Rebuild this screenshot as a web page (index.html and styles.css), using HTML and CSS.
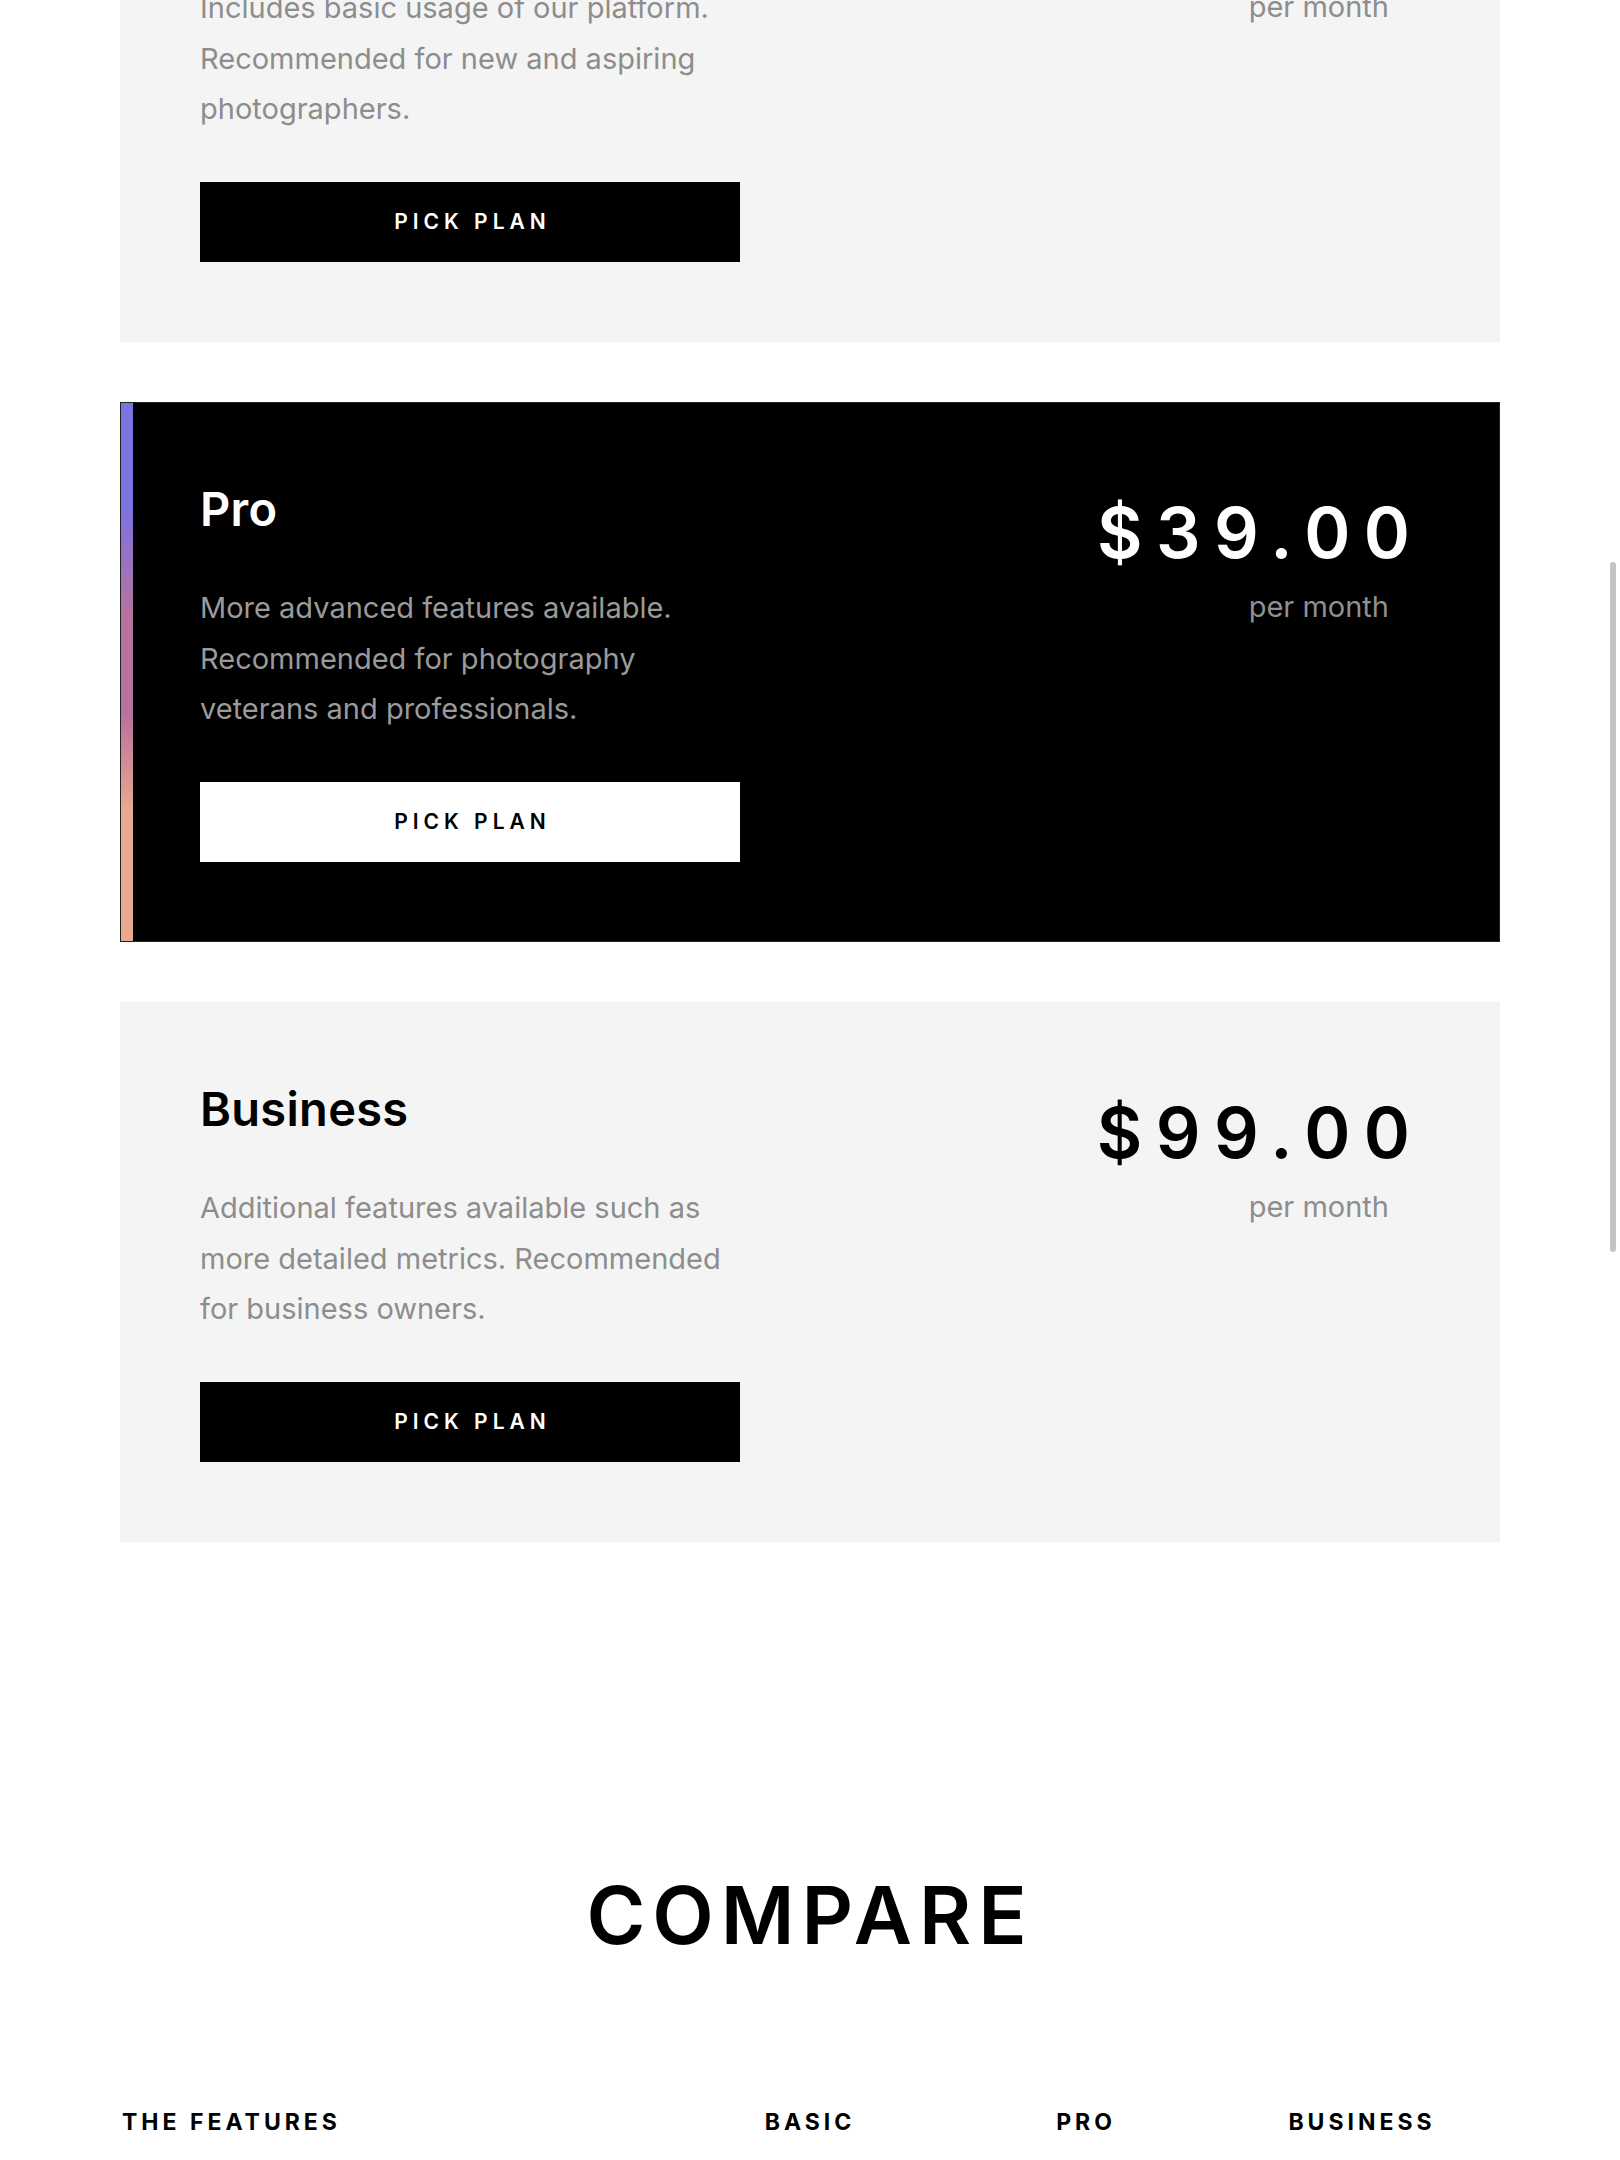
FILE: index.html
```html
<!DOCTYPE html>
<html lang="en">
<head>
<meta charset="utf-8">
<title>Pricing</title>
<link rel="stylesheet" href="styles.css">
</head>
<body>
<main class="page">
  <section class="plans">
    <article class="plan">
      <div class="plan-info">
        <h3 class="plan-name">Basic</h3>
        <p class="plan-desc">Includes basic usage of our platform. Recommended for new and aspiring photographers.</p>
        <a class="plan-btn" href="#">PICK PLAN</a>
      </div>
      <div class="plan-price">
        <div class="price">$19.00</div>
        <div class="period">per month</div>
      </div>
    </article>
    <article class="plan plan-pro">
      <div class="plan-info">
        <h3 class="plan-name">Pro</h3>
        <p class="plan-desc">More advanced features available. Recommended for photography veterans and professionals.</p>
        <a class="plan-btn" href="#">PICK PLAN</a>
      </div>
      <div class="plan-price">
        <div class="price">$39.00</div>
        <div class="period">per month</div>
      </div>
    </article>
    <article class="plan">
      <div class="plan-info">
        <h3 class="plan-name">Business</h3>
        <p class="plan-desc">Additional features available such as more detailed metrics. Recommended for business owners.</p>
        <a class="plan-btn" href="#">PICK PLAN</a>
      </div>
      <div class="plan-price">
        <div class="price">$99.00</div>
        <div class="period">per month</div>
      </div>
    </article>
  </section>

  <section class="compare">
    <h2 class="compare-title">COMPARE</h2>
    <div class="compare-head">
      <div class="col-feature">THE FEATURES</div>
      <div class="col-plan">BASIC</div>
      <div class="col-plan">PRO</div>
      <div class="col-plan">BUSINESS</div>
    </div>
  </section>
</main>
<div class="scroll-thumb"></div>
</body>
</html>
```
FILE: styles.css
```css
* { box-sizing: border-box; }

html, body {
  margin: 0;
  padding: 0;
  background: #fff;
  overflow: hidden;
}

body {
  font-family: Inter, "Liberation Sans", sans-serif;
  color: #000;
}

.page {
  width: 1380px;
  margin: 0 auto;
}

.plans {
  display: flex;
  flex-direction: column;
  gap: 60px;
  margin-top: -198px;
}

.plan {
  position: relative;
  display: flex;
  justify-content: space-between;
  align-items: flex-start;
  padding: 80px;
  background: #f4f4f4;
  height: 540px;
}

.plan-pro {
  background: #000;
  border: 1px solid #222;
  padding: 79px;
  color: #fff;
}

.plan-pro::before {
  content: "";
  position: absolute;
  top: 0;
  bottom: 0;
  left: 0;
  width: 12px;
  background: linear-gradient(to bottom, #7b74e0 0%, #7b74e0 20%, #b8739c 40%, #b8739c 58%, #e9a98f 76%, #e9a98f 100%);
}

.plan-info {
  width: 540px;
  display: flex;
  flex-direction: column;
  align-items: flex-start;
}

.plan-name {
  margin: 0;
  font-size: 47px;
  line-height: 53px;
  font-weight: 600;
  letter-spacing: 0.3px;
}

.plan-desc {
  margin: 48px 0 0;
  font-size: 29px;
  line-height: 50.5px;
  color: #8d8d8d;
  font-weight: 400;
}

.plan-pro .plan-desc { color: #9a9a9a; }

.plan-btn {
  margin-top: 47px;
  width: 540px;
  height: 80px;
  display: flex;
  align-items: center;
  justify-content: center;
  background: #000;
  color: #fff;
  text-decoration: none;
  font-size: 21px;
  font-weight: 600;
  letter-spacing: 5px;
  padding-left: 5px;
}

.plan-pro .plan-btn {
  background: #fff;
  color: #000;
}

.plan-price {
  display: flex;
  flex-direction: column;
  align-items: flex-end;
  padding-top: 11px;
}

.price {
  font-size: 70px;
  line-height: 79px;
  font-weight: 600;
  letter-spacing: 13.5px;
  margin-right: -3.5px;
}

.period {
  margin-top: 10px;
  margin-right: 31px;
  font-size: 29px;
  line-height: 50px;
  color: #8d8d8d;
}

.plan-pro .period { color: #8f8f8f; }

.compare {
  padding-top: 320px;
}

.compare-title {
  margin: 0;
  text-align: center;
  font-size: 80px;
  line-height: 106px;
  font-weight: 600;
  letter-spacing: 7px;
}

.compare-head {
  margin-top: 137px;
  display: grid;
  grid-template-columns: 2fr 1fr 1fr 1fr;
  font-size: 23px;
  line-height: 34px;
  font-weight: 700;
  letter-spacing: 4px;
}

.col-feature { padding-left: 2px; }
.col-plan { text-align: center; }

.scroll-thumb {
  position: fixed;
  top: 562px;
  right: 4px;
  width: 6px;
  height: 690px;
  border-radius: 3px;
  background: #c4c4c4;
}
```
